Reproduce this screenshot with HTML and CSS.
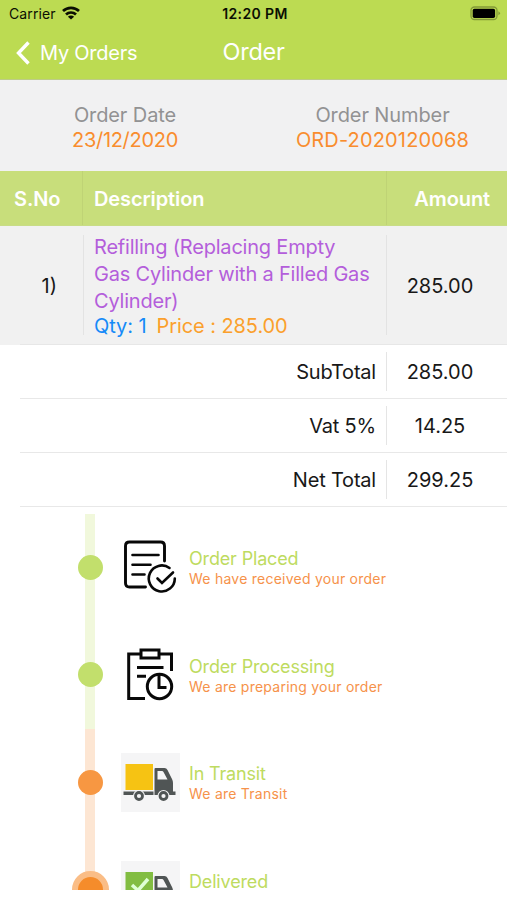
FILE: index.html
```html
<!DOCTYPE html>
<html lang="en">
<head>
<meta charset="utf-8">
<title>Order</title>
<link rel="stylesheet" href="styles.css">
</head>
<body>
<header class="top">
  <div class="status">
    <div class="carrier"><span>Carrier</span>
      <svg class="wifi" width="18" height="14" viewBox="0 0 18 14" fill="none" stroke="#0b0f02" stroke-width="2.700"><path d="M1 5.1a11.6 11.6 0 0 1 16 0"/><path d="M4 8.500a7.2 7.2 0 0 1 10 0"/><path d="M9 13.6 5.900 10.800a4.400 4.400 0 0 1 6.200 0z" fill="#0b0f02" stroke="none"/></svg>
    </div>
    <div class="time">12:20 PM</div>
    <svg class="battery" width="31" height="15" viewBox="0 0 31 15"><rect x="1" y="1" width="26" height="12.5" rx="3.5" fill="none" stroke="#839a37" stroke-width="1.3"/><rect x="2.7" y="2.7" width="22.4" height="9.2" rx="1.7" fill="#000"/><path d="M28.4 5.2q3.2 2 0 4z" fill="#839a37"/></svg>
  </div>
  <nav class="nav">
    <a class="back"><svg width="16" height="24" viewBox="0 0 16 24" fill="none" stroke="#fff" stroke-width="3.400"><path d="M13.500 1.500 3.500 12l10 10.500"/></svg><span>My Orders</span></a>
    <h1>Order</h1>
  </nav>
</header>
<section class="summary">
  <div class="date"><p class="label">Order Date</p><p class="value">23/12/2020</p></div>
  <div class="number"><p class="label">Order Number</p><p class="value">ORD-2020120068</p></div>
</section>
<section class="head">
  <div class="h-no">S.No</div><div class="h-desc">Description</div><div class="h-amt">Amount</div>
</section>
<section class="item">
  <div class="no">1)</div>
  <div class="desc">
    <p class="name">Refilling (Replacing Empty<br>Gas Cylinder with a Filled Gas<br>Cylinder)</p>
    <p class="meta"><span class="qty">Qty: 1</span><span class="price">Price : 285.00</span></p>
  </div>
  <div class="amt">285.00</div>
</section>
<section class="totals">
  <div class="total"><div class="t-label">SubTotal</div><div class="t-amt">285.00</div></div>
  <div class="total"><div class="t-label">Vat 5%</div><div class="t-amt">14.25</div></div>
  <div class="total"><div class="t-label">Net Total</div><div class="t-amt">299.25</div></div>
</section>
<section class="timeline">
  <div class="step">
    <div class="track"><i class="dot"></i></div>
    <div class="icon"><svg width="59" height="60" viewBox="0 0 59 60" fill="none" stroke="#080808" stroke-width="2.600" stroke-linecap="round"><path d="M24.500 50H8.500Q4.500 50 4.500 46V9Q4.500 5 8.500 5H39.500Q43.500 5 43.500 9V24" stroke-width="2.900"/><path d="M11.500 18h26M11.500 27.800h18M11.500 37.500h12"/><path d="M48.500 31A13 13 0 1 0 53.800 41.500"/><path d="m36.500 41.500 4.500 4.500L52 35.500"/></svg></div>
    <div class="text"><h2>Order Placed</h2><p>We have received your order</p></div>
  </div>
  <div class="step">
    <div class="track"><i class="dot"></i></div>
    <div class="icon lower"><svg width="59" height="60" viewBox=".5 0 59 60" fill="none" stroke="#080808" stroke-width="3"><path d="M20 8H8.200V52.500H24.500M39.500 8H51V25"/><path d="M20.500 4h18v8h-18z"/><path d="M16.500 21.500h26.500M16.500 30.200h9"/><circle cx="39" cy="40.500" r="12.200"/><path d="M38.500 29V41.500H46"/></svg></div>
    <div class="text"><h2>Order Processing</h2><p>We are preparing your order</p></div>
  </div>
  <div class="step warm">
    <div class="track"><i class="dot"></i></div>
    <div class="icon tile"><svg width="59" height="59" viewBox="1 0 59 59"><path d="M5.500 11h27.500v26H5.500z" fill="#f6c313"/><path d="M3.500 38.500h30V42h-30z" fill="#505555"/><path fill-rule="evenodd" d="M34.500 16q0-1 1-1h9q2 0 3 2l4.500 9q1 2 1 4v8.500h2.500V42H34.500zM37.500 18v8.500h10l-4-7.500q-.5-1-1.500-1z" fill="#505555"/><circle cx="19" cy="43" r="6" fill="#f5f5f6"/><circle cx="43.500" cy="43" r="6" fill="#f5f5f6"/><g fill="#f5f5f6" stroke="#505555" stroke-width="2.800"><circle cx="19" cy="43" r="3.500"/><circle cx="43.500" cy="43" r="3.500"/></g></svg></div>
    <div class="text"><h2>In Transit</h2><p>We are Transit</p></div>
  </div>
  <div class="step warm">
    <div class="track"><i class="dot current"></i></div>
    <div class="icon tile"><svg width="59" height="59" viewBox="1 0 59 59"><path d="M5.500 11h27.500v26H5.500z" fill="#82bd42"/><path d="m12 24 6 5.500L28 18" fill="none" stroke="#dfffd5" stroke-width="3.500"/><path d="M3.500 38.500h30V42h-30z" fill="#505555"/><path fill-rule="evenodd" d="M34.500 16q0-1 1-1h9q2 0 3 2l4.500 9q1 2 1 4v8.500h2.500V42H34.500zM37.500 18v8.500h10l-4-7.500q-.5-1-1.500-1z" fill="#505555"/></svg></div>
    <div class="text"><h2>Delivered</h2></div>
  </div>
</section>
</body>
</html>
```
FILE: styles.css
```css
* { box-sizing: border-box; }
body { margin: 0; width: 507px; height: 900px; overflow: hidden; background: #fff; color: #181818; font-family: Inter, "Liberation Sans", sans-serif; font-size: 20px; white-space: nowrap; }
h1, h2, p { margin: 0; font-weight: 400; }
svg { display: block; flex: none; }
.top { height: 80px; background: #bcdb52; border-bottom: 1px solid #bdcc87; }
.status { height: 27px; display: grid; grid-template-columns: 1fr auto 1fr; align-items: center; padding: 0 6px 0 9px; font-size: 14px; color: #0b0f02; }
.carrier { display: flex; align-items: center; gap: 6px; letter-spacing: .1px; }
.wifi { margin-top: -2px; }
.time { font-weight: 600; letter-spacing: .4px; }
.battery { justify-self: end; }
.nav { height: 52px; display: grid; grid-template-columns: 1fr auto 1fr; align-items: center; padding: 0 15px; color: #fff; }
.back { display: flex; align-items: center; gap: 9px; letter-spacing: -.25px; }
h1 { font-size: 23.500px; line-height: 46px; padding-bottom: 2px; letter-spacing: -.3px; }
.summary { height: 91px; background: #f1f1f2; display: grid; grid-template-columns: 250px 1fr; text-align: center; padding-top: 23px; line-height: 25px; }
.number { padding-left: 8px; }
.label { color: #929293; letter-spacing: -.1px; }
.value { color: #f98d2e; letter-spacing: -.3px; }
.number .value { letter-spacing: .15px; }
.head { height: 55px; background: #c8de7b; display: grid; grid-template-columns: 83px 304px 1fr; line-height: 57px; color: #fff; font-weight: 600; border-bottom: 1px solid #c8dc86; letter-spacing: -.1px; }
.head div { height: 54px; }
.head div + div { border-left: 1px solid #bfd375; margin-left: -1px; }
.h-no { padding-left: 14px; }
.h-desc { padding-left: 11px; }
.h-amt { text-align: right; padding-right: 17px; }
.item { height: 119px; background: #f1f1f1; display: grid; grid-template-columns: 83px 304px 1fr; align-items: center; padding: 9px 0 10px; }
.no { padding: 2px 26px 0 0; text-align: right; }
.desc { height: 100px; border-left: 1px solid #e3e3e3; border-right: 1px solid #e3e3e3; padding-left: 10px; }
.name { color: #b45edb; line-height: 27px; margin-top: -1px; letter-spacing: -.2px; }
.meta { line-height: 22px; display: flex; gap: 10px; letter-spacing: -.08px; }
.qty { color: #168af8; }
.price { color: #fba02c; }
.amt, .t-amt { text-align: center; padding: 2px 14px 0 0; }
.totals { margin-left: 20px; border-top: 1px solid #e7e7e7; margin-top: -1px; }
.total { height: 54px; display: grid; grid-template-columns: 367px 1fr; align-items: center; border-bottom: 1px solid #e8e8e8; line-height: 37px; }
.t-label { text-align: right; padding: 2px 10px 0 0; border-right: 1px solid #e5e5e5; letter-spacing: -.2px; }
.timeline { height: 376px; margin-top: 7px; overflow: hidden; }
.step { height: 107.500px; display: grid; grid-template-columns: 121px 68px 1fr; }
.track { margin-left: 85px; width: 10px; background: #f1f8dc; display: flex; align-items: center; justify-content: center; }
.dot { width: 25px; height: 25px; border-radius: 50%; background: #c2df6c; flex: none; margin-bottom: 1px; }
.icon { align-self: center; }
.icon svg { margin-top: -1px; }
.lower svg { margin-top: 1px; }
.tile svg { background: #f5f5f6; margin-top: 0; }
.warm .track { background: #fde6d3; }
.warm .dot { background: #f79742; }
.warm .current { width: 37px; height: 37px; border: 6px solid #fabd86; background: #f58c2b; }
.text { padding-top: 33px; }
.text h2 { font-size: 18px; line-height: 24px; color: #bedb60; letter-spacing: -.16px; }
.text p { font-size: 14px; line-height: 15px; color: #f6924a; letter-spacing: .24px; }
```
